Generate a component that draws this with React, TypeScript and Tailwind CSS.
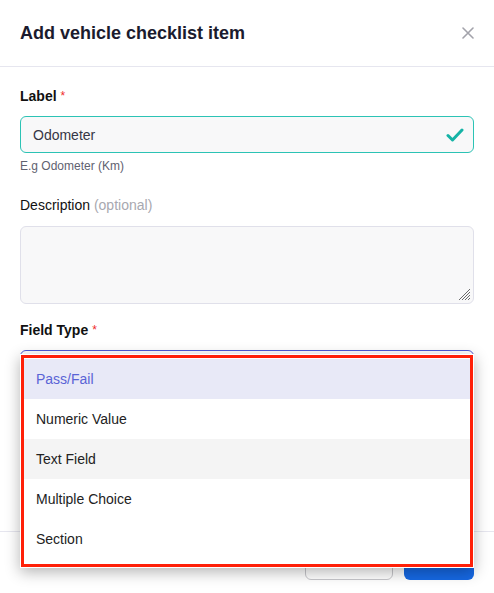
import React from "react";

const options = ["Pass/Fail", "Numeric Value", "Text Field", "Multiple Choice", "Section"];

const Required = () => <span className="ml-1 text-[12px] font-normal text-[#ef2b2b] align-top">*</span>;

const App = () => {
    return (
        <div className="relative w-[494px] h-[593px] overflow-hidden bg-white flex flex-col font-['Liberation_Sans',Arial,sans-serif]">
            {/* header */}
            <div className="h-[67px] shrink-0 px-5 flex items-center justify-between border-b border-[#e6e6ef]">
                <h1 className="text-[18px] font-bold text-[#1b1b2e]">Add vehicle checklist item</h1>
                <button className="w-4 h-4 mr-[-2px] flex items-center justify-center text-[#a3a3ab]">
                    <svg width="12" height="12" viewBox="0 0 12 12" fill="none" stroke="currentColor" strokeWidth="1.6" strokeLinecap="round">
                        <path d="M1 1 L11 11 M11 1 L1 11" />
                    </svg>
                </button>
            </div>

            {/* body */}
            <div className="px-5 pt-[19px] flex flex-col">
                <label className="text-sm leading-5 font-bold text-[#111]">
                    Label<Required />
                </label>
                <div className="mt-[10px] h-[37px] rounded-md border border-[#2cc3b5] bg-[#f8f8f9] flex items-center justify-between pl-3 pr-[9px]">
                    <span className="text-sm text-[#363645]">Odometer</span>
                    <svg width="18" height="14" viewBox="0 0 18 14" fill="none" stroke="#15b3a6" strokeWidth="3" strokeLinecap="round" strokeLinejoin="round">
                        <path d="M2 7.5 L6.5 12 L16 2" />
                    </svg>
                </div>
                <p className="mt-[5px] text-xs leading-4 text-[#5f6270]">E.g Odometer (Km)</p>

                <label className="mt-[21px] text-sm leading-5 text-[#111]">
                    Description <span className="text-[#a8a8b0]">(optional)</span>
                </label>
                <div className="relative mt-[11px] h-[78px] rounded-md border border-[#e0e0ea] bg-[#f8f8f9]">
                    <svg className="absolute right-[2px] bottom-[2px]" width="13" height="13" viewBox="0 0 13 13" stroke="#6b6b6b" strokeWidth="1">
                        <path d="M1 12 L12 1 M4 12 L12 4 M7 12 L12 7 M10 12 L12 10" />
                    </svg>
                </div>

                <label className="mt-4 text-sm leading-5 font-bold text-[#111]">
                    Field Type<Required />
                </label>
                <div className="mt-[10px] h-[38px] rounded-md border border-[#4f5bd5] bg-white" />
            </div>

            {/* footer */}
            <div className="mt-auto border-t border-[#e6e6ef] px-5 pt-2 pb-[13px] flex justify-end gap-[11px]">
                <button className="h-10 w-[88px] rounded-md border border-[#c8c8cc] bg-white text-sm text-[#333]">Cancel</button>
                <button className="h-10 w-[70px] rounded-md bg-[#1668e3] text-sm font-bold text-white">Save</button>
            </div>

            {/* open select menu */}
            <div className="absolute left-5 top-[354px] w-[454px] bg-white p-px shadow-[0_4px_14px_rgba(0,0,0,0.3)]">
                <div className="h-[212px] border-[3px] border-[#ff2008] bg-white pt-px">
                    {options.map((o, i) => (
                        <div
                            key={o}
                            className={
                                "h-10 px-3 flex items-center text-sm " +
                                (i === 0 ? "bg-[#e8e9f7] text-[#5a64d6]" : i === 2 ? "bg-[#f4f4f4] text-[#222]" : "text-[#222]")
                            }
                        >
                            {o}
                        </div>
                    ))}
                </div>
            </div>
        </div>
    );
};

export default App;
